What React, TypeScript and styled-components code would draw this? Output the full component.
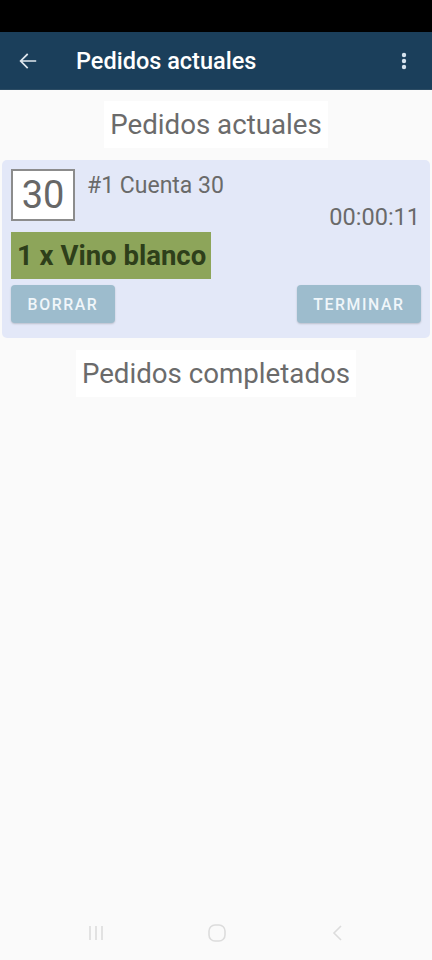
import React from "react";
import styled, { createGlobalStyle } from "styled-components";

const GlobalStyle = createGlobalStyle`
  html, body {
    margin: 0;
    padding: 0;
    background: #fafafa;
    font-family: Roboto, "Liberation Sans", sans-serif;
  }
`;

const Screen = styled.div`
  width: 432px;
  height: 960px;
  display: flex;
  flex-direction: column;
  background: #fafafa;
`;

const StatusBar = styled.div`
  height: 32px;
  background: #000;
`;

const AppBar = styled.header`
  height: 57px;
  display: flex;
  align-items: center;
  background: #1b3f5b;
  border-bottom: 1px solid #2c4c64;
  color: #fff;
`;

const IconButton = styled.button`
  width: 56px;
  height: 56px;
  display: flex;
  align-items: center;
  justify-content: center;
  background: none;
  border: none;
  padding: 0;
  color: #dfe7ee;
`;

const Title = styled.h1`
  flex: 1;
  margin: 0 0 0 20px;
  font-size: 23.5px;
  font-weight: 500;
`;

const Content = styled.main`
  flex: 1;
  display: flex;
  flex-direction: column;
  align-items: center;
  padding-top: 11px;
`;

const SectionTitle = styled.div<{ $mt?: number }>`
  height: 47px;
  display: flex;
  align-items: center;
  padding: 0 6px;
  margin-top: ${(p) => p.$mt ?? 0}px;
  background: #fff;
  color: #6b6b6b;
  font-size: 27.7px;
`;

const Card = styled.section`
  align-self: stretch;
  margin: 12px 2px 0;
  padding: 9px 9px 15px 9px;
  background: #e3e8f8;
  border-radius: 5px;
  display: flex;
  flex-direction: column;
`;

const CardTop = styled.div`
  display: flex;
  height: 63px;
`;

const TableNumber = styled.div`
  width: 60px;
  height: 48px;
  border: 2px solid #8c8c8c;
  background: #fff;
  display: flex;
  align-items: center;
  justify-content: center;
  color: #676767;
  font-size: 38px;
`;

const Info = styled.div`
  flex: 1;
  display: flex;
  flex-direction: column;
  padding-left: 12px;
  color: #6a6a6a;
`;

const Account = styled.div`
  font-size: 23px;
  line-height: 32px;
  margin-top: 1px;
`;

const Timer = styled.div`
  align-self: flex-end;
  margin-right: 1px;
  font-size: 23.5px;
  line-height: 30px;
`;

const Item = styled.div`
  align-self: flex-start;
  width: 200px;
  height: 47px;
  box-sizing: border-box;
  display: flex;
  align-items: center;
  padding-left: 6px;
  background: #8da55a;
  color: #2e3f1a;
  font-size: 27.5px;
  font-weight: 700;
  white-space: nowrap;
`;

const Actions = styled.div`
  display: flex;
  justify-content: space-between;
  margin-top: 6px;
`;

const ActionButton = styled.button<{ $w: number }>`
  width: ${(p) => p.$w}px;
  height: 38px;
  border: none;
  border-radius: 4px;
  background: #9dbccd;
  color: #f0f6fa;
  font-family: Roboto, "Liberation Sans", sans-serif;
  font-size: 15.8px;
  font-weight: 500;
  letter-spacing: 1.6px;
  box-shadow: 0 1px 2px rgba(0, 0, 0, 0.18);
`;

const NavBar = styled.nav`
  height: 54px;
  display: flex;
  align-items: center;
  justify-content: center;
  gap: 101px;
  padding-left: 1px;
  color: #dcdcdc;
`;

const App = () => (
  <>
    <GlobalStyle />
    <Screen>
      <StatusBar />
      <AppBar>
        <IconButton aria-label="back">
          <svg width="22" height="22" viewBox="0 0 24 24" fill="none" stroke="currentColor" strokeWidth="1.9" strokeLinecap="square">
            <path d="M20 12H5M11 5l-7 7 7 7" />
          </svg>
        </IconButton>
        <Title>Pedidos actuales</Title>
        <IconButton aria-label="menu">
          <svg width="6" height="18" viewBox="0 0 6 18" fill="#d7e3ee">
            <circle cx="3" cy="3" r="2.2" />
            <circle cx="3" cy="9" r="2.2" />
            <circle cx="3" cy="15" r="2.2" />
          </svg>
        </IconButton>
      </AppBar>
      <Content>
        <SectionTitle>Pedidos actuales</SectionTitle>
        <Card>
          <CardTop>
            <TableNumber>30</TableNumber>
            <Info>
              <Account>#1 Cuenta 30</Account>
              <Timer>00:00:11</Timer>
            </Info>
          </CardTop>
          <Item>1 x Vino blanco</Item>
          <Actions>
            <ActionButton $w={104}>BORRAR</ActionButton>
            <ActionButton $w={124}>TERMINAR</ActionButton>
          </Actions>
        </Card>
        <SectionTitle $mt={12}>Pedidos completados</SectionTitle>
      </Content>
      <NavBar>
        <svg width="20" height="20" viewBox="0 0 20 20" fill="none" stroke="currentColor" strokeWidth="1.6">
          <path d="M4 3v14M10 3v14M16 3v14" />
        </svg>
        <svg width="20" height="20" viewBox="0 0 20 20" fill="none" stroke="currentColor" strokeWidth="1.6">
          <rect x="2" y="2" width="16" height="16" rx="6" />
        </svg>
        <svg width="20" height="20" viewBox="0 0 20 20" fill="none" stroke="currentColor" strokeWidth="1.6">
          <path d="M13 3l-7 7 7 7" />
        </svg>
      </NavBar>
    </Screen>
  </>
);

export default App;
